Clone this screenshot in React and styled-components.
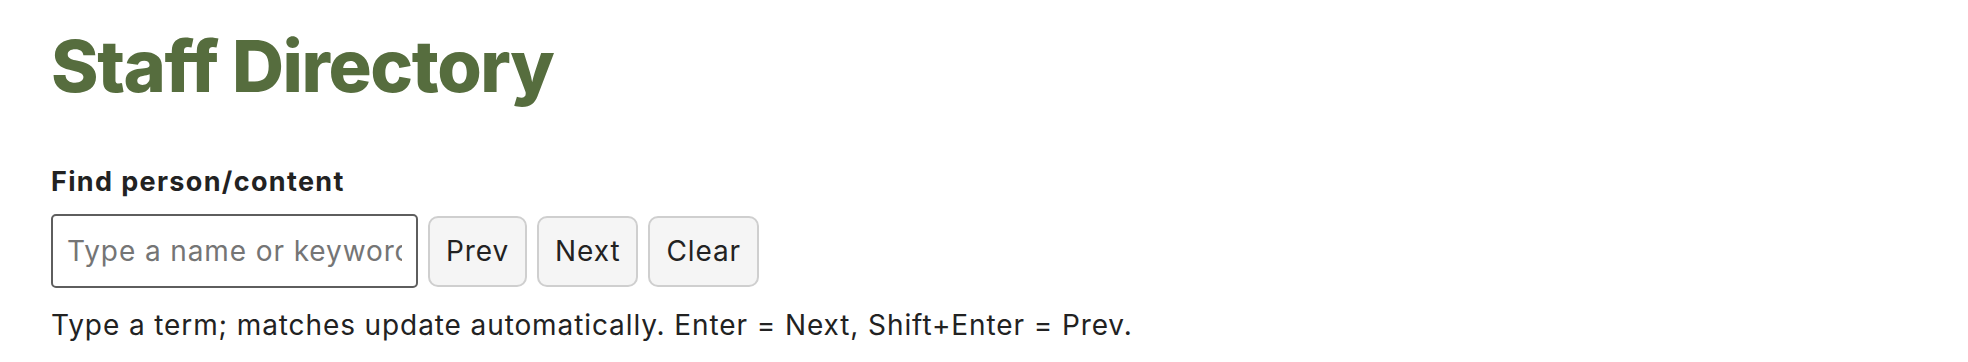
import React, { useState } from "react";
import styled, { createGlobalStyle } from "styled-components";

const GlobalStyle = createGlobalStyle`
  html, body {
    margin: 0;
    padding: 0;
    background: #ffffff;
  }

  body {
    font-family: "Inter", "Noto Sans", sans-serif;
    color: #222222;
  }
`;

const Page = styled.main`
  padding: 22px 51px 0;
`;

const Title = styled.h1`
  margin: 0;
  font-size: 72px;
  line-height: 88px;
  font-weight: 800;
  letter-spacing: -1.4px;
  color: #566d3e;
`;

const Label = styled.label`
  display: block;
  margin-top: 55px;
  font-size: 27px;
  line-height: 34px;
  font-weight: 700;
  letter-spacing: 1.35px;
  color: #222222;
`;

const SearchRow = styled.div`
  display: flex;
  align-items: center;
  gap: 10px;
  margin-top: 15px;
`;

const SearchInput = styled.input`
  box-sizing: border-box;
  width: 367px;
  height: 74px;
  padding: 0 14px;
  border: 2px solid #5e5e5e;
  border-radius: 5px;
  font-family: inherit;
  font-size: 28px;
  letter-spacing: 0.9px;
  color: #222222;
  background: #ffffff;

  &::placeholder {
    color: #757575;
  }
`;

const Button = styled.button`
  box-sizing: border-box;
  height: 71px;
  padding: 0 16px;
  border: 2px solid #cfcfcf;
  border-radius: 10px;
  background: #f5f5f5;
  font-family: inherit;
  font-size: 28px;
  letter-spacing: 0.9px;
  color: #222222;
  cursor: pointer;
`;

const Hint = styled.p`
  margin: 19px 0 0;
  font-size: 28px;
  line-height: 36px;
  letter-spacing: 0.9px;
  color: #222222;
`;

export default function App() {
  const [search, setSearch] = useState("");

  return (
    <>
      <GlobalStyle />
      <Page>
        <Title>Staff Directory</Title>
        <Label htmlFor="staff-search">Find person/content</Label>
        <SearchRow>
          <SearchInput
            id="staff-search"
            value={search}
            placeholder="Type a name or keyword"
            onChange={(e) => setSearch(e.target.value)}
          />
          <Button>Prev</Button>
          <Button>Next</Button>
          <Button onClick={() => setSearch("")}>Clear</Button>
        </SearchRow>
        <Hint>
          Type a term; matches update automatically. Enter = Next, Shift+Enter = Prev.
        </Hint>
      </Page>
    </>
  );
}
